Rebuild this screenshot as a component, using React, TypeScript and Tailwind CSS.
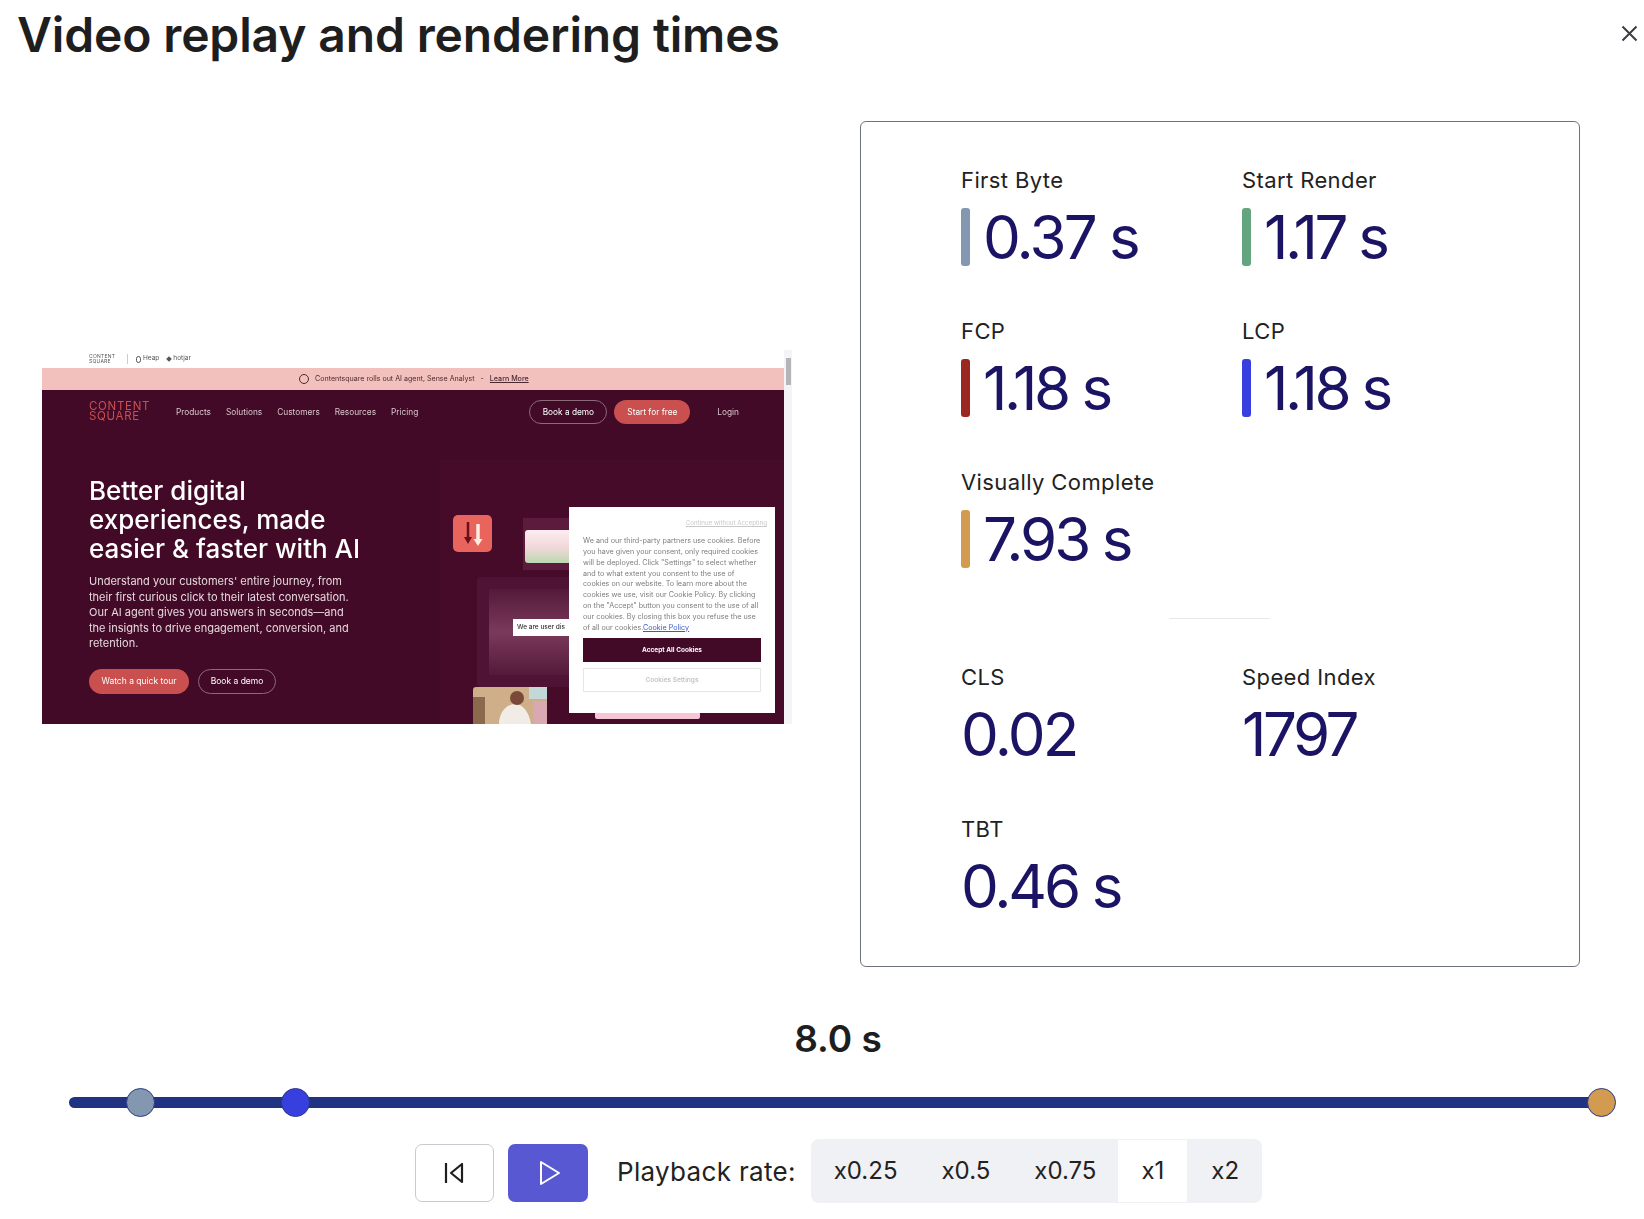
const inter = "font-['Inter',sans-serif]";

function Metric({
  label,
  value,
  bar,
  spacing,
}: {
  label: string;
  value: string;
  bar?: string;
  spacing: string;
}) {
  return (
    <div className="h-[100px]">
      <div className="h-[28px] text-[22px] leading-[28px] tracking-[0.018em] text-[#222]">{label}</div>
      <div className="mt-[14px] flex h-[58px] items-center">
        {bar && <span className={`mr-[13px] h-[58px] w-[9px] rounded-[3px] ${bar}`} />}
        <span className={`text-[60px] leading-[58px] text-[#1b1464] ${spacing}`}>{value}</span>
      </div>
    </div>
  );
}

function SitePreview() {
  return (
    <div className="relative h-[374px] w-[750px] overflow-hidden bg-white text-white blur-[0.6px]">
      <div className="flex h-[18px] items-center pl-[47px] text-[6.5px] text-[#555]">
        <span className="w-[30px] text-[5px] leading-[5px] tracking-[0.05em]">CONTENT SQUARE</span>
        <span className="mx-[8px] h-[10px] w-px bg-[#ccc]" />
        <span className="mr-[2px] h-[7px] w-[5px] rounded-full border border-[#555]" />
        <span className="mr-[8px]">Heap</span>
        <span className="mr-[2px] h-[4px] w-[4px] rotate-45 bg-[#555]" />
        <span>hotjar</span>
      </div>
      <div className="flex h-[22px] items-center bg-[#f3c1bd] pl-[257px] text-[7.1px] text-[#4a2a30]">
        <span className="mr-[6px] h-[10px] w-[10px] rounded-full border border-[#4a2a30]" />
        <span>Contentsquare rolls out AI agent, Sense Analyst</span>
        <span className="mx-[6px]">-</span>
        <span className="font-medium underline">Learn More</span>
      </div>
      <div className="h-[334px] bg-[#420a26] pl-[47px]">
        <div className="flex h-[44px] items-center text-[8.3px] text-[#d9c8cf]">
          <span className="-mt-[2px] w-[87px] text-[11.5px] leading-[10.5px] tracking-[0.06em] text-[#c9504f]">CONTENT SQUARE</span>
          <div className="flex gap-[15px]">
            <span>Products</span>
            <span>Solutions</span>
            <span>Customers</span>
            <span>Resources</span>
            <span>Pricing</span>
          </div>
          <span className="ml-[111px] flex h-[24px] w-[78px] items-center justify-center rounded-full border border-[#8d6a78] text-white">Book a demo</span>
          <span className="ml-[7px] flex h-[24px] w-[76px] items-center justify-center rounded-full bg-[#c9504f] text-white">Start for free</span>
          <span className="ml-[27px]">Login</span>
        </div>
        <h2 className="mt-[42px] text-[26px] font-medium leading-[29px] text-white">
          Better digital
          <br />
          experiences, made
          <br />
          easier &amp; faster with AI
        </h2>
        <p className="mt-[11px] w-[275px] text-[11px] leading-[15.5px] text-[#e6d9de]">
          Understand your customers' entire journey, from
          <br />
          their first curious click to their latest conversation.
          <br />
          Our AI agent gives you answers in seconds—and
          <br />
          the insights to drive engagement, conversion, and
          <br />
          retention.
        </p>
        <div className="mt-[17px] flex gap-[9px] text-[8.5px]">
          <span className="flex h-[25px] w-[100px] items-center justify-center rounded-full bg-[#c9504f]">Watch a quick tour</span>
          <span className="flex h-[25px] w-[78px] items-center justify-center rounded-full border border-[#8d6a78]">Book a demo</span>
        </div>
      </div>

      {/* decorative hero art, sits over the maroon */}
      <div className="absolute left-[398px] top-[110px] h-[264px] w-[345px] bg-[#460b29]" />
      <div className="absolute left-[481px] top-[168px] h-[52px] w-[60px] bg-[#5c1a3c]" />
      <div className="absolute left-[435px] top-[227px] h-[110px] w-[125px] rounded-[4px] bg-[#4f1335] p-[12px]">
        <div className="h-full w-full bg-gradient-to-b from-[#541a3a] via-[#7a3a5c] to-[#541a3a]" />
      </div>
      <div className="absolute left-[411px] top-[165px] flex h-[37px] w-[39px] items-center justify-center rounded-[5px] bg-[#e8645c]">
        <svg width="24" height="28" viewBox="0 0 24 28">
          <path d="M7 2v18" stroke="#6b0f1e" strokeWidth="2.500" />
          <path d="M3 17l4 7 4-7z" fill="#6b0f1e" />
          <path d="M17 4v18" stroke="#fbeee0" strokeWidth="3.500" />
          <path d="M12.500 19L17 26l4.500-7z" fill="#fbeee0" />
        </svg>
      </div>
      <div className="absolute left-[483px] top-[180px] h-[33px] w-[50px] rounded-[3px] bg-gradient-to-b from-[#fbeef0] via-[#f3d8dc] to-[#bcd8b0]" />
      <div className="absolute left-[471px] top-[269px] flex h-[17px] w-[60px] items-center whitespace-nowrap bg-white pl-[4px] text-[6.5px] font-medium text-[#333]">
        We are user dis
      </div>
      <svg className="absolute left-[431px] top-[337px]" width="74" height="37" viewBox="0 0 74 37">
        <rect width="74" height="37" rx="3" fill="#cfae8a" />
        <rect x="56" width="18" height="12" fill="#c4d8d8" />
        <rect y="10" width="12" height="27" fill="#8a6a4c" />
        <path d="M26 37c0-12 8-20 16-20s14 8 16 20z" fill="#f2ece6" />
        <circle cx="44" cy="11" r="7" fill="#7a4a38" />
        <rect x="60" y="14" width="14" height="23" fill="#d9a8b0" />
      </svg>
      <div className="absolute left-[553px] top-[360px] h-[9px] w-[105px] rounded-[2px] bg-[#f5c6d6]" />

      {/* cookie banner */}
      <div className="absolute left-[527px] top-[157px] h-[206px] w-[206px] bg-white px-[14px] pt-[11px] text-[#7d7d7d]">
        <div className="-mr-[6px] text-right text-[6.2px] text-[#c8c8c8] underline">Continue without Accepting</div>
        <p className="mt-[9px] whitespace-nowrap text-[7.2px] leading-[10.8px]">
          We and our third-party partners use cookies. Before
          <br />
          you have given your consent, only required cookies
          <br />
          will be deployed. Click "Settings" to select whether
          <br />
          and to what extent you consent to the use of
          <br />
          cookies on our website. To learn more about the
          <br />
          cookies we use, visit our Cookie Policy. By clicking
          <br />
          on the "Accept" button you consent to the use of all
          <br />
          our cookies. By closing this box you refuse the use
          <br />
          of all our cookies.<span className="text-[#3a5bc7] underline">Cookie Policy</span>
        </p>
        <div className="mt-[5px] flex h-[24px] items-center justify-center bg-[#420a26] text-[6.5px] font-bold text-white">Accept All Cookies</div>
        <div className="mt-[6px] flex h-[24px] items-center justify-center border border-[#e6e6e6] text-[6.5px] font-semibold text-[#c4c4c4]">Cookies Settings</div>
      </div>

      {/* page scrollbar */}
      <div className="absolute right-0 top-0 h-full w-[8px] bg-[#f4f4f6]">
        <div className="ml-[2px] mt-[8px] h-[27px] w-[5px] bg-[#b5b5b8]" />
      </div>
    </div>
  );
}

export default function App() {
  return (
    <div className={`${inter} h-[1219px] w-[1644px] overflow-hidden bg-white text-[#1e1e1e]`}>
      <header className="flex h-[68px] items-start justify-between pl-[17px] pr-[6px]">
        <h1 className="pt-[6px] text-[48px] font-semibold leading-[58px] tracking-[-0.003em]">Video replay and rendering times</h1>
        <svg className="mt-[25px]" width="17" height="17" viewBox="0 0 17 17" fill="none" stroke="#3a3f45" strokeWidth="2">
          <path d="M1.500 1.500l14 14M15.500 1.500l-14 14" />
        </svg>
      </header>

      <main className="mt-[53px] flex">
        <div className="ml-[42px] mt-[229px] w-[750px]">
          <SitePreview />
        </div>
        <section className="ml-[68px] h-[846px] w-[720px] rounded-[6px] border border-[#6f7280] pl-[100px] pt-[44px]">
          <div className="grid grid-cols-[281px_281px] gap-y-[51px]">
            <Metric label="First Byte" value="0.37 s" bar="bg-[#8497b0]" spacing="tracking-[-0.046em]" />
            <Metric label="Start Render" value="1.17 s" bar="bg-[#62a57f]" spacing="tracking-[-0.058em]" />
            <Metric label="FCP" value="1.18 s" bar="bg-[#9b2820]" spacing="tracking-[-0.055em]" />
            <Metric label="LCP" value="1.18 s" bar="bg-[#383fdf]" spacing="tracking-[-0.058em]" />
            <Metric label="Visually Complete" value="7.93 s" bar="bg-[#d39b4f]" spacing="tracking-[-0.052em]" />
          </div>
          <div className="ml-[208px] mt-[50px] h-px w-[101px] bg-[#e8e8ea]" />
          <div className="mt-[44px] grid grid-cols-[281px_281px] gap-y-[52px]">
            <Metric label="CLS" value="0.02" spacing="tracking-[-0.045em]" />
            <Metric label="Speed Index" value="1797" spacing="tracking-[-0.057em]" />
            <Metric label="TBT" value="0.46 s" spacing="tracking-[-0.052em]" />
          </div>
        </section>
      </main>

      <div className="mt-[50px] pl-[32px] text-center text-[37px] font-semibold leading-[44px]">8.0 s</div>

      <div className="relative ml-[69px] mt-[36px] h-[11px] w-[1532px] rounded-full bg-[#203282]">
        <span className="absolute left-[57px] top-[-9px] h-[29px] w-[29px] rounded-full border border-[#2d3a86] bg-[#8497b0]" />
        <span className="absolute left-[212px] top-[-9px] h-[29px] w-[29px] rounded-full border border-[#2d3a86] bg-[#383fdf]" />
        <span className="absolute left-[1518px] top-[-9px] h-[29px] w-[29px] rounded-full border border-[#2d3a86] bg-[#d39b4f]" />
      </div>

      <div className="ml-[415px] mt-[31px] flex items-center">
        <button type="button" className="flex h-[58px] w-[79px] items-center justify-center rounded-[7px] border border-[#c9c9cf] bg-white">
          <svg width="22" height="22" viewBox="0 0 22 22" fill="none" stroke="#1e1e1e" strokeWidth="2.200">
            <path d="M2 1v20" />
            <path d="M18 2v18L7 11z" strokeLinejoin="round" />
          </svg>
        </button>
        <button type="button" className="ml-[14px] flex h-[58px] w-[80px] items-center justify-center rounded-[7px] bg-[#5858d3] pl-[3px]">
          <svg width="22" height="26" viewBox="0 0 22 26" fill="none" stroke="#fff" strokeWidth="2">
            <path d="M2 2v22l18-11z" strokeLinejoin="round" />
          </svg>
        </button>
        <span className="mb-[4px] ml-[29px] text-[26px] tracking-[0.012em] text-[#222]">Playback rate:</span>
        <div className="mb-[4px] ml-[15px] flex h-[64px] items-stretch rounded-[8px] bg-[#f0f1f5] p-px text-[24px] text-[#222]">
          <span className="flex items-center px-[22px]">x0.25</span>
          <span className="flex items-center px-[22px]">x0.5</span>
          <span className="flex items-center px-[22px]">x0.75</span>
          <span className="flex items-center bg-white px-[23px]">x1</span>
          <span className="flex items-center pl-[24px] pr-[22px]">x2</span>
        </div>
      </div>
    </div>
  );
}
